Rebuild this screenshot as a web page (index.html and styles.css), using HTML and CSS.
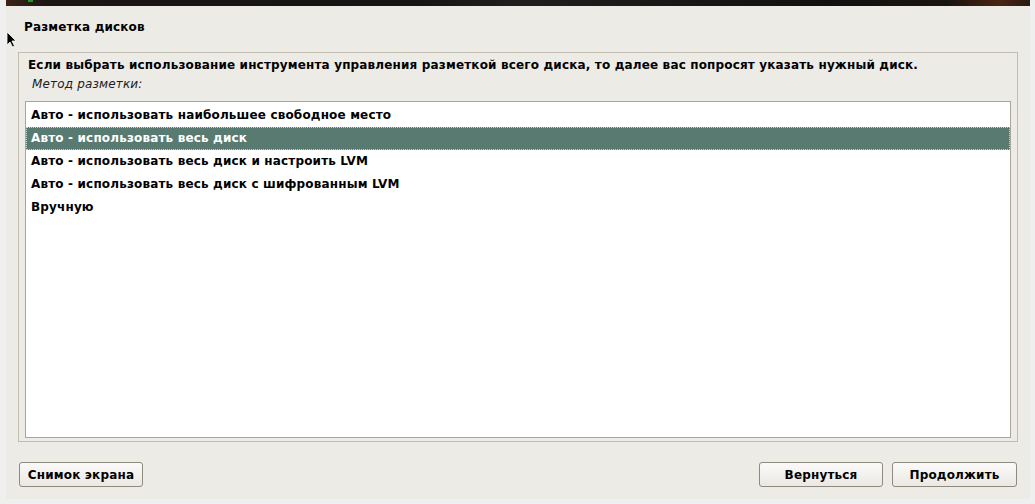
FILE: index.html
```html
<!DOCTYPE html>
<html lang="ru">
<head>
<meta charset="utf-8">
<link rel="stylesheet" href="styles.css">
</head>
<body>
<div class="banner"><span class="led"></span></div>
<div class="window">
  <div class="title">Разметка дисков</div>
  <div class="frame">
    <div class="question">Если выбрать использование инструмента управления разметкой всего диска, то далее вас попросят указать нужный диск.</div>
    <div class="label">Метод разметки:</div>
    <div class="list">
      <div class="row">Авто - использовать наибольшее свободное место</div>
      <div class="row selected">Авто - использовать весь диск</div>
      <div class="row">Авто - использовать весь диск и настроить LVM</div>
      <div class="row">Авто - использовать весь диск с шифрованным LVM</div>
      <div class="row">Вручную</div>
    </div>
  </div>
  <div class="actions">
    <button class="btn btn-shot">Снимок экрана</button>
    <div class="spacer"></div>
    <button class="btn btn-back">Вернуться</button>
    <button class="btn btn-next">Продолжить</button>
  </div>
</div>
<svg class="cursor" width="12" height="18" viewBox="0 0 12 18"><path d="M1 1 L1 14 L4 11 L6.5 16 L8.5 15 L6 10 L10 10 Z" fill="#000" stroke="#fff" stroke-width="0.8"/></svg>
</body>
</html>
```
FILE: styles.css
```css
html, body {
  margin: 0;
  padding: 0;
}
body {
  background: #efefef;
  width: 1035px;
  height: 504px;
  overflow: hidden;
  position: relative;
  font-family: "DejaVu Sans", sans-serif;
  font-size: 12px;
  letter-spacing: 0.16px;
  color: #000;
}
.banner {
  height: 6px;
  margin-left: 6px;
  width: 1024px;
  background: linear-gradient(90deg, #3a2418 0%, #1c1614 4%, #151515 40%, #1f1f1e 50%, #111 80%, #1a1410 92%, #4a2412 97%, #2a1a12 100%);
  position: relative;
}
.led {
  position: absolute;
  left: 22px;
  top: 0;
  width: 5px;
  height: 2px;
  background: #1a9a1a;
}
.window {
  margin-left: 6px;
  width: 1024px;
  height: 493px;
  background: #edebe6;
  display: flex;
  flex-direction: column;
}
.title {
  height: 46px;
  box-sizing: border-box;
  padding: 14px 0 0 18px;
  line-height: 15px;
  font-size: 12px;
  font-weight: bold;
}
.frame {
  margin-left: 12px;
  width: 1000px;
  height: 390px;
  box-sizing: border-box;
  border: 1px solid #c2bcb0;
  padding: 0 0 0 6px;
  display: flex;
  flex-direction: column;
}
.question {
  font-weight: bold;
  padding: 5px 0 0 3px;
  line-height: 15px;
}
.label {
  font-style: italic;
  padding: 4px 0 0 7px;
  line-height: 15px;
  color: #202020;
}
.list {
  margin-top: 9px;
  width: 986px;
  height: 337px;
  box-sizing: border-box;
  border: 1px solid #aca596;
  background: #fff;
  padding-top: 2px;
}
.row {
  height: 23px;
  line-height: 23px;
  padding-left: 5px;
  font-weight: bold;
  box-sizing: border-box;
}
.row.selected {
  background: #587a70;
  color: #fff;
  outline: 1px dotted #c8d6d0;
  outline-offset: -1px;
}
.actions {
  display: flex;
  align-items: flex-start;
  padding: 20px 13px 0 13px;
  gap: 9px;
}
.spacer {
  flex: 1;
}
.btn {
  font-family: "DejaVu Sans", sans-serif;
  font-size: 12px;
  letter-spacing: 0.16px;
  font-weight: bold;
  height: 25px;
  box-sizing: border-box;
  border: 1px solid #8f8a7e;
  border-radius: 3px;
  background: linear-gradient(#fbfaf9, #ebe8e3);
  color: #000;
  padding: 0;
}
.btn-shot { width: 124px; }
.btn-back { width: 124px; }
.btn-next { width: 125px; }
.cursor {
  position: absolute;
  left: 6px;
  top: 31px;
}
```
